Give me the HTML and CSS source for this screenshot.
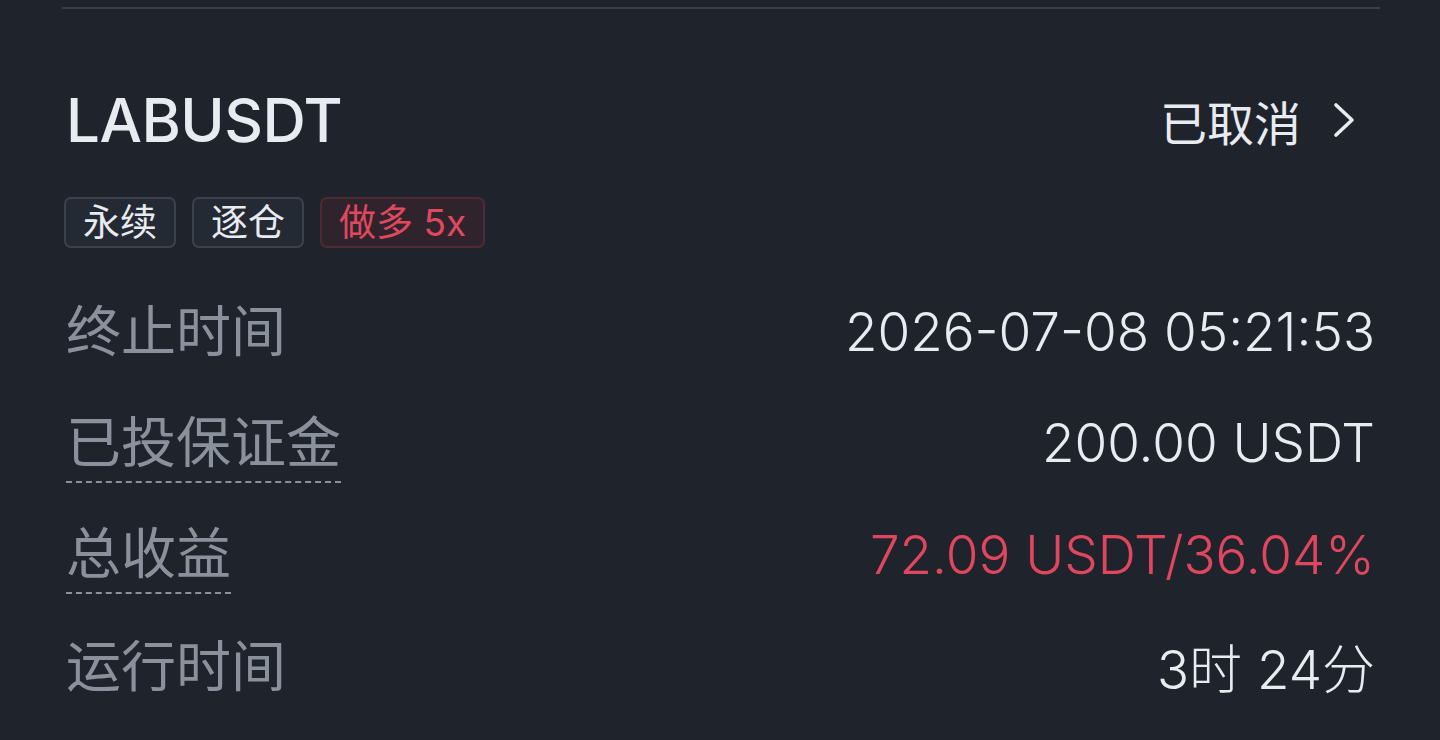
FILE: index.html
```html
<!DOCTYPE html>
<html lang="zh">
<head>
  <meta charset="UTF-8">
  <title>LABUSDT</title>
  <link rel="stylesheet" href="styles.css">
</head>
<body>
  <div class="divider"></div>

  <div class="card">
    <div class="head">
      <div class="symbol">LABUSDT</div>
      <div class="status">
        <span>已取消</span>
        <svg class="chev" width="26" height="36" viewBox="0 0 26 36">
          <path d="M5 3 L21 18 L5 33" fill="none" stroke="#e8ebf0" stroke-width="3.6" stroke-linecap="round" stroke-linejoin="round"/>
        </svg>
      </div>
    </div>

    <div class="tags">
      <span class="tag">永续</span>
      <span class="tag">逐仓</span>
      <span class="tag long">做多 5x</span>
    </div>

    <div class="rows">
      <div class="row">
        <span class="label">终止时间</span>
        <span class="value">2026-07-08 05:21:53</span>
      </div>
      <div class="row">
        <span class="label dotted">已投保证金</span>
        <span class="value">200.00 USDT</span>
      </div>
      <div class="row">
        <span class="label dotted">总收益</span>
        <span class="value red">72.09 USDT/36.04%</span>
      </div>
      <div class="row">
        <span class="label">运行时间</span>
        <span class="value">3时 24分</span>
      </div>
    </div>
  </div>
</body>
</html>
```

FILE: styles.css
```css
body { margin: 0; background: #1f242c; font-family: Inter, "Noto Sans CJK SC", sans-serif; color: #e8ebf0; overflow: hidden; }
.divider { height: 2px; margin: 7px 60px 0 62px; background: #3a404b; }
.card { padding: 0 65px 0 66px; }
.head { display: flex; justify-content: space-between; align-items: center; margin-top: 76px; height: 70px; }
.symbol { font-size: 60px; font-weight: 500; letter-spacing: -0.5px; }
.status { display: flex; align-items: center; gap: 30px; font-size: 47px; margin-right: 18px; }
.chev { display: block; }
.tags { display: flex; gap: 16px; margin-top: 42px; margin-left: -2px; }
.tag { height: 47px; line-height: 47px; padding: 0 17px; font-size: 37px; border: 2px solid #3b424d; border-radius: 7px; background: #242a33; color: #e8ebf0; }
.tag.long { color: #e0485f; border-color: #4f2a33; background: #2f242b; }
.rows { margin-top: 28px; }
.row { display: flex; justify-content: space-between; align-items: center; height: 111.5px; }
.label { font-size: 55px; color: #8b919c; line-height: 1.4; }
.label.dotted { border-bottom: 2px dashed #8b919c; }
.value { font-size: 53px; font-weight: 300; }
.red { color: #e0465e; }
```
